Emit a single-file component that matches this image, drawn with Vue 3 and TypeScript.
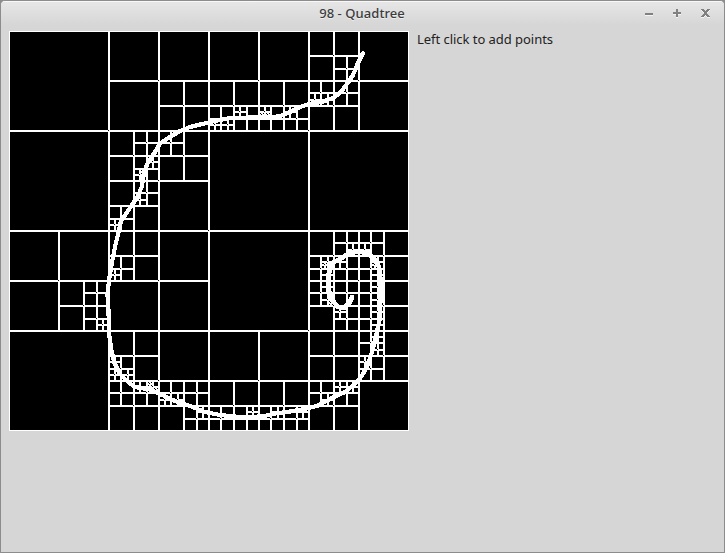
<script setup lang="ts">
interface Cell {
  x: number
  y: number
  size: number
}

const SIZE = 400

// Subdivided cells per level, as "row: columns" in units of that level's cell size.
const splits: Record<number, number[]>[] = [
  { 0: [0] },
  { 0: [0, 1], 1: [0, 1] },
  { 0: [1, 2, 3], 1: [1], 2: [0, 1, 3], 3: [1, 2, 3] },
  {
    0: [6], 1: [3, 4, 5, 6], 2: [2, 3], 3: [2], 4: [2, 6, 7],
    5: [1, 6, 7], 6: [2, 6, 7], 7: [2, 3, 4, 5, 6],
  },
  {
    1: [13], 2: [12, 13], 3: [8, 9, 10, 11], 4: [5, 6], 5: [5], 6: [5], 7: [4],
    8: [13, 14], 9: [4, 12, 13, 14], 10: [3, 12, 13, 14], 11: [3, 13, 14],
    12: [14], 13: [4, 14], 14: [4, 5, 6, 7, 12, 13], 15: [7, 8, 9, 10, 11],
  },
  {
    5: [24, 25], 6: [18, 20, 22], 7: [16, 17], 10: [11], 11: [10], 13: [10], 15: [8],
    17: [27, 28], 18: [25, 26, 29], 19: [8, 25, 29], 20: [25, 29], 21: [25, 29],
    22: [26, 29], 23: [7, 29], 24: [29], 25: [29], 26: [8, 28], 27: [8, 9],
    28: [10, 11, 26, 27], 29: [12, 13, 25], 30: [15, 19, 21, 23],
  },
  {
    13: [40, 41], 22: [21], 37: [50, 58], 43: [51], 56: [22], 57: [23],
  },
]

const roundEven = (v: number): number => {
  const f = Math.floor(v)
  return v - f === 0.5 ? f + (f % 2) : Math.round(v)
}

function outline({ x, y, size }: Cell): string {
  const l = roundEven(x)
  const t = roundEven(y)
  const w = roundEven(x + size) - l
  const h = roundEven(y + size) - t
  return (
    `M${l} ${t}h${w}v1h${-w}z` +
    `M${l} ${t}h1v${h}h-1z` +
    `M${l + w - 1} ${t}h1v${h - 1}h-1z` +
    `M${l} ${t + h - 1}h${w - 1}v1h${1 - w}z`
  )
}

function walk(level: number, col: number, row: number): string {
  const size = SIZE / 2 ** level
  let d = outline({ x: col * size, y: row * size, size })
  if (splits[level]?.[row]?.includes(col)) {
    for (const dy of [0, 1]) {
      for (const dx of [0, 1]) d += walk(level + 1, col * 2 + dx, row * 2 + dy)
    }
  }
  return d
}

const grid = walk(0, 0, 0) + 'M399 399h1v1h-1z'

const points: [number, number][] = [
  [354, 22], [349, 32], [344, 44], [338, 53], [331, 62], [324, 67], [313, 71], [300, 73],
  [291, 76], [281, 81], [271, 85], [261, 86.5], [241, 86.5], [221, 87], [206, 90], [191, 93.5],
  [181, 96], [171, 100], [161, 106], [151, 112.5], [146, 121], [139, 131], [135, 142],
  [133, 155], [129, 165], [121, 177], [112, 190], [109.5, 201], [106, 216], [103, 231],
  [100, 249], [98.5, 264], [99.5, 279], [100, 302], [102, 317], [105, 331], [111, 343],
  [119, 351], [126, 356], [141, 358.5], [151, 363], [166, 370], [181, 375], [196, 381],
  [211, 384], [231, 386], [253, 385.5], [266, 382.5], [281, 380.5], [296, 378], [309, 374.5],
  [323, 367], [336, 361], [346, 353], [352, 346], [358, 336], [363, 321], [367, 305],
  [371, 287], [371.5, 269], [371.5, 249], [370, 236], [366, 229], [359, 222], [349, 220.5],
  [341, 222], [331, 228], [323, 232], [319.5, 244], [319.5, 259], [323, 269], [329, 276],
  [336, 276.5], [341, 271], [343, 266],
]
const trail = points.map((p) => p.join(',')).join(' ')
const spiral = points.slice(60).map((p) => p.join(',')).join(' ')
</script>

<template>
  <div class="window">
    <header class="titlebar">
      <span class="title">98 - Quadtree</span>
      <div class="controls">
        <svg viewBox="0 0 10 10"><path d="M1 6h8v2H1z" /></svg>
        <svg viewBox="0 0 10 10"><path d="M4 2h2v3h3v2H6v3H4V7H1V5h3z" /></svg>
        <svg viewBox="0 0 10 10"><path d="M1 2h3v1h1v1h1V3h1V2h3v1H9v1H8v1H7v2h1v1h1v1h1v1H7V9H6V8H5v1H4v1H1V9h1V8h1V7h1V5H3V4H2V3H1z" /></svg>
      </div>
    </header>
    <main class="content">
      <svg class="canvas" viewBox="0 0 400 400" shape-rendering="crispEdges">
        <rect width="400" height="400" fill="#000" />
        <path :d="grid" fill="#fff" />
        <g fill="none" stroke="#fff" stroke-linecap="round" stroke-linejoin="round">
          <polyline :points="trail" stroke-width="4.2" />
          <polyline :points="spiral" stroke-width="4.8" />
        </g>
      </svg>
      <span class="hint">Left click to add points</span>
    </main>
  </div>
</template>

<style>
html,
body {
  margin: 0;
  background: #8c8c8c;
}
</style>

<style scoped>
.window {
  box-sizing: border-box;
  width: 725px;
  height: 553px;
  border: 1px solid #8c8c8c;
  border-radius: 5px 5px 0 0;
  background: #d6d6d6;
  overflow: hidden;
  font-family: 'Noto Sans', 'Open Sans', sans-serif;
  font-size: 13px;
}
.titlebar {
  box-sizing: border-box;
  position: relative;
  display: flex;
  align-items: center;
  justify-content: center;
  height: 24px;
  padding-bottom: 2px;
  border-top: 1px solid #f8f8f8;
  background: linear-gradient(#e6e6e6, #d6d6d6);
  color: #3c3c3c;
}
.title {
  padding-right: 1px;
  font-weight: 500;
  letter-spacing: 0.07px;
  line-height: 18px;
  text-shadow: 0 1px #eee;
}
.controls {
  position: absolute;
  right: 14px;
  top: 5px;
  display: flex;
  gap: 18px;
}
.controls svg {
  width: 10px;
  height: 10px;
  fill: #808080;
  filter: drop-shadow(0 1px 0 #f4f4f4);
}
.content {
  display: flex;
  gap: 8px;
  padding: 6px 8px;
}
.canvas {
  width: 400px;
  height: 400px;
  flex: none;
}
.hint {
  letter-spacing: -0.04px;
  line-height: 17px;
  color: #222;
  white-space: nowrap;
}
</style>
